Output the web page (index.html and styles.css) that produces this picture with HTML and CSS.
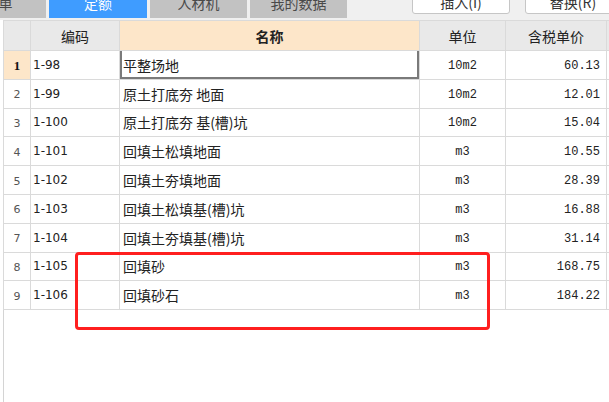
FILE: index.html
```html
<!DOCTYPE html>
<html lang="zh-CN">
<head>
    <meta charset="UTF-8">
    <title>定额</title>
    <link rel="stylesheet" href="styles.css">
</head>
<body>
    <div class="topbar">
        <div class="tabs">
            <div class="tab tab-cut">清单</div>
            <div class="tab active">定额</div>
            <div class="tab">人材机</div>
            <div class="tab">我的数据</div>
        </div>
        <div class="actions">
            <button class="btn btn-insert">插入(I)</button>
            <button class="btn btn-replace">替换(R)</button>
        </div>
    </div>

    <div class="grid-wrap">
        <table class="grid">
            <colgroup>
                <col class="c-num">
                <col class="c-code">
                <col class="c-name">
                <col class="c-unit">
                <col class="c-price">
                <col class="c-rest">
            </colgroup>
            <thead>
                <tr>
                    <th></th>
                    <th>编码</th>
                    <th class="h-name">名称</th>
                    <th>单位</th>
                    <th>含税单价</th>
                    <th></th>
                </tr>
            </thead>
            <tbody>
                <tr class="current">
                    <td class="num">1</td><td class="code">1-98</td><td class="name">平整场地</td><td class="unit">10m2</td><td class="price">60.13</td><td></td>
                </tr>
                <tr>
                    <td class="num">2</td><td class="code">1-99</td><td class="name">原土打底夯 地面</td><td class="unit">10m2</td><td class="price">12.01</td><td></td>
                </tr>
                <tr>
                    <td class="num">3</td><td class="code">1-100</td><td class="name">原土打底夯 基(槽)坑</td><td class="unit">10m2</td><td class="price">15.04</td><td></td>
                </tr>
                <tr>
                    <td class="num">4</td><td class="code">1-101</td><td class="name">回填土松填地面</td><td class="unit">m3</td><td class="price">10.55</td><td></td>
                </tr>
                <tr>
                    <td class="num">5</td><td class="code">1-102</td><td class="name">回填土夯填地面</td><td class="unit">m3</td><td class="price">28.39</td><td></td>
                </tr>
                <tr>
                    <td class="num">6</td><td class="code">1-103</td><td class="name">回填土松填基(槽)坑</td><td class="unit">m3</td><td class="price">16.88</td><td></td>
                </tr>
                <tr>
                    <td class="num">7</td><td class="code">1-104</td><td class="name">回填土夯填基(槽)坑</td><td class="unit">m3</td><td class="price">31.14</td><td></td>
                </tr>
                <tr>
                    <td class="num">8</td><td class="code">1-105</td><td class="name">回填砂</td><td class="unit">m3</td><td class="price">168.75</td><td></td>
                </tr>
                <tr>
                    <td class="num">9</td><td class="code">1-106</td><td class="name">回填砂石</td><td class="unit">m3</td><td class="price">184.22</td><td></td>
                </tr>
            </tbody>
        </table>
        <div class="mark"></div>
    </div>
</body>
</html>
```

FILE: styles.css
```css
html, body {
    margin: 0;
    padding: 0;
    background: #fff;
    width: 609px;
    height: 402px;
    overflow: hidden;
    font-family: "Noto Sans CJK SC", sans-serif;
}
.topbar {
    display: flex;
    justify-content: space-between;
    height: 30px;
    margin-top: -10px;
    background: #f0f0f0;
}
.tabs {
    display: flex;
    gap: 3px;
    height: 28px;
}
.tab {
    width: 97px;
    height: 28px;
    line-height: 26px;
    text-align: center;
    font-size: 14px;
    color: #4a4a4a;
    background: #c2c2c2;
}
.tab-cut {
    width: 95px;
    margin-left: -49px;
}
.tab.active {
    width: 98px;
    background: #3f9cff;
    color: #fff;
}
.actions {
    display: flex;
    gap: 15px;
    margin-right: -12px;
}
.btn {
    height: 24px;
    padding: 0;
    font-family: "Noto Sans CJK SC", sans-serif;
    font-size: 14px;
    line-height: 18px;
    color: #333;
    background: #fff;
    border: 1px solid #c6c6c6;
    border-radius: 3px;
}
.btn-insert {
    width: 98px;
}
.btn-replace {
    width: 96px;
}
.grid-wrap {
    position: relative;
    margin-left: 3px;
    height: 382px;
    border-left: 1px solid #d4d4d4;
}
.grid {
    border-collapse: collapse;
    table-layout: fixed;
    width: 620px;
    margin-left: -1px;
}
.c-num { width: 27px; }
.c-code { width: 89px; }
.c-name { width: 300px; }
.c-unit { width: 86px; }
.c-price { width: 101px; }
.c-rest { width: 17px; }
.grid th, .grid td {
    box-sizing: border-box;
    border: 1px solid #dadada;
    padding: 0;
    white-space: nowrap;
    overflow: hidden;
}
.grid th {
    height: 30px;
    background: #e9e9e9;
    font-size: 14px;
    font-weight: normal;
    color: #222;
}
.grid th.h-name {
    background: #fde6c9;
    font-weight: bold;
}
.grid td {
    height: 28.8px;
    font-size: 14px;
    color: #222;
}
.grid td.num {
    padding-top: 2px;
    text-align: center;
    font-family: "DejaVu Sans", sans-serif;
    font-size: 11px;
    color: #555;
}
.grid td.code {
    padding-left: 2px;
    font-family: "DejaVu Sans", sans-serif;
    font-size: 12px;
}
.grid td.name {
    padding-left: 3px;
}
.grid td.unit {
    padding-top: 2px;
    text-align: center;
    font-family: "Liberation Mono", monospace;
    font-size: 12px;
}
.grid td.price {
    padding-top: 2px;
    text-align: right;
    padding-right: 6px;
    font-family: "Liberation Mono", monospace;
    font-size: 12px;
}
.current td.num {
    background: #fde6c9;
    color: #111;
    font-weight: bold;
    font-family: "Liberation Serif", serif;
    font-size: 13px;
}
.current td.code {
    border-left: 1px solid #8fbcea;
}
.current td.name {
    border-top: 1px solid #8fbcea;
    box-shadow: inset 2px 0 #7a7a7a, inset -2px 0 #7a7a7a, inset 0 -2px #7a7a7a;
}
.mark {
    position: absolute;
    left: 71px;
    top: 232px;
    width: 409px;
    height: 72px;
    border: 3px solid #ff1f1f;
    border-radius: 4px;
}
```
